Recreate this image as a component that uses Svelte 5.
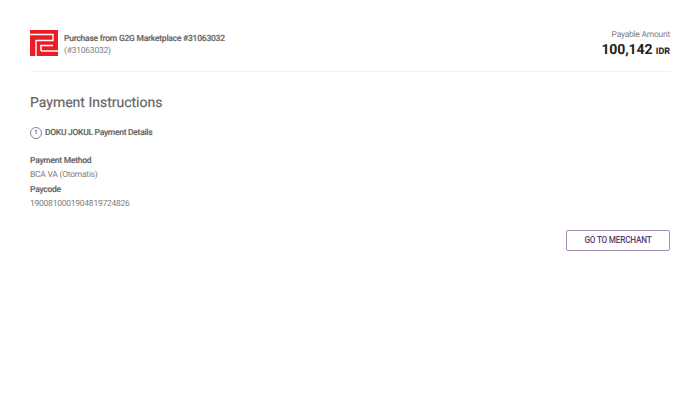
<script lang="ts">
	const details = [
		{ label: 'Payment Method', value: 'BCA VA (Otomatis)' },
		{ label: 'Paycode', value: '1900810001904819724826' }
	];
</script>

<div class="page">
	<header class="top">
		<div class="merchant">
			<svg class="logo" width="28" height="26" viewBox="0 0 28 26" aria-hidden="true">
				<rect width="28" height="26" fill="#ed1c24" />
				<path d="M0 4.5H23V10.5H6V26M11 21H28M11 21V15.5H23" fill="none" stroke="#fff" stroke-width="1.4" />
			</svg>
			<div class="order">
				<div class="order-title">Purchase from G2G Marketplace #31063032</div>
				<div class="order-id">(#31063032)</div>
			</div>
		</div>
		<div class="amount">
			<div class="amount-label">Payable Amount</div>
			<div class="amount-value">100,142 <span class="currency">IDR</span></div>
		</div>
	</header>

	<h1>Payment Instructions</h1>

	<div class="step">
		<span class="step-num">1</span>
		<span class="step-title">DOKU JOKUL Payment Details</span>
	</div>

	<dl class="details">
		{#each details as row}
			<dt>{row.label}</dt>
			<dd>{row.value}</dd>
		{/each}
	</dl>

	<div class="actions">
		<button type="button">GO TO MERCHANT</button>
	</div>
</div>

<style>
	:global(body) {
		margin: 0;
		background: #fff;
	}
	.page {
		box-sizing: border-box;
		width: 700px;
		height: 400px;
		padding: 30px 30px 0;
		font-family: Roboto, "Liberation Sans", sans-serif;
		color: #666;
		text-rendering: geometricPrecision;
	}
	.top {
		display: flex;
		justify-content: space-between;
		height: 41px;
		border-bottom: 1px solid #f2f2f2;
	}
	.merchant {
		display: flex;
		align-items: center;
		gap: 6px;
		height: 26px;
	}
	.logo {
		display: block;
	}
	.order {
		padding-top: 4px;
		font-size: 8.5px;
		line-height: 12px;
		letter-spacing: -0.23px;
	}
	.order-title {
		font-weight: 500;
		-webkit-text-stroke: 0.15px #666;
		color: #666;
	}
	.order-id {
		color: #808080;
	}
	.amount {
		text-align: right;
	}
	.amount-label {
		font-size: 8.5px;
		line-height: 10px;
		letter-spacing: -0.25px;
		color: #808080;
	}
	.amount-value {
		margin-top: 1px;
		font-size: 14px;
		line-height: 18px;
		font-weight: 700;
		letter-spacing: -0.1px;
		color: #222;
	}
	.currency {
		font-size: 9px;
		letter-spacing: 0;
	}
	h1 {
		margin: 22px 0 0;
		font-size: 14px;
		line-height: 18px;
		font-weight: 400;
		color: #666;
		-webkit-text-stroke: 0.2px #666;
	}
	.step {
		display: flex;
		align-items: center;
		gap: 3px;
		margin-top: 15px;
	}
	.step-num {
		box-sizing: border-box;
		width: 12px;
		height: 12px;
		border: 1px solid #8f7a9c;
		border-radius: 50%;
		font-size: 6px;
		font-weight: 500;
		line-height: 10px;
		text-align: center;
		color: #555;
	}
	.step-title {
		font-size: 8.5px;
		letter-spacing: -0.28px;
		font-weight: 500;
		-webkit-text-stroke: 0.15px #666;
		color: #666;
	}
	.details {
		margin: 15px 0 0;
		font-size: 8.5px;
		line-height: 14.4px;
		letter-spacing: -0.25px;
	}
	dt {
		font-weight: 500;
		-webkit-text-stroke: 0.15px #666;
		color: #666;
	}
	dd {
		margin: 0;
		color: #808080;
	}
	.actions {
		display: flex;
		justify-content: flex-end;
		margin-top: 18px;
	}
	button {
		width: 104px;
		height: 21px;
		padding: 0;
		background: #fff;
		border: 1px solid #a78fb5;
		border-radius: 2px;
		font-family: inherit;
		font-size: 8.2px;
		letter-spacing: -0.2px;
		font-weight: 500;
		color: #5a3a70;
	}
</style>
